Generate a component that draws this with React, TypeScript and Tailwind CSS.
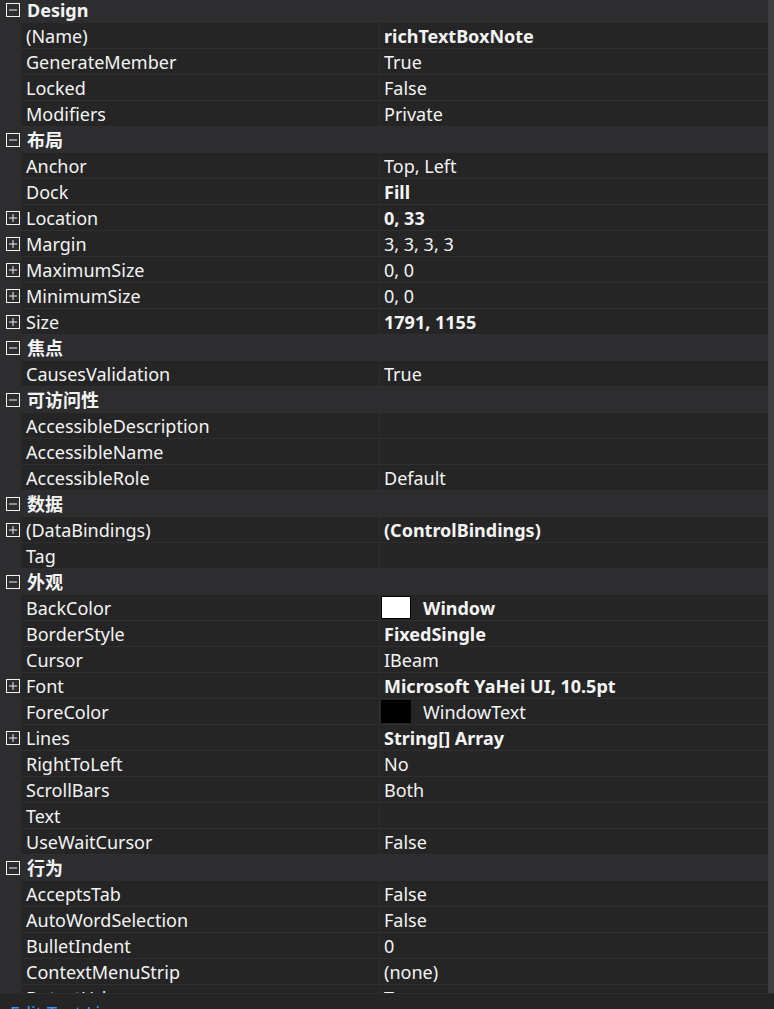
import React from "react";

type Row =
  | { kind: "cat"; label: string }
  | {
      kind: "prop";
      name: string;
      value?: string;
      bold?: boolean;
      expand?: boolean;
      swatch?: "white" | "black";
    };

const rows: Row[] = [
  { kind: "cat", label: "Design" },
  { kind: "prop", name: "(Name)", value: "richTextBoxNote", bold: true },
  { kind: "prop", name: "GenerateMember", value: "True" },
  { kind: "prop", name: "Locked", value: "False" },
  { kind: "prop", name: "Modifiers", value: "Private" },
  { kind: "cat", label: "布局" },
  { kind: "prop", name: "Anchor", value: "Top, Left" },
  { kind: "prop", name: "Dock", value: "Fill", bold: true },
  { kind: "prop", name: "Location", value: "0, 33", bold: true, expand: true },
  { kind: "prop", name: "Margin", value: "3, 3, 3, 3", expand: true },
  { kind: "prop", name: "MaximumSize", value: "0, 0", expand: true },
  { kind: "prop", name: "MinimumSize", value: "0, 0", expand: true },
  { kind: "prop", name: "Size", value: "1791, 1155", bold: true, expand: true },
  { kind: "cat", label: "焦点" },
  { kind: "prop", name: "CausesValidation", value: "True" },
  { kind: "cat", label: "可访问性" },
  { kind: "prop", name: "AccessibleDescription" },
  { kind: "prop", name: "AccessibleName" },
  { kind: "prop", name: "AccessibleRole", value: "Default" },
  { kind: "cat", label: "数据" },
  { kind: "prop", name: "(DataBindings)", value: "(ControlBindings)", bold: true, expand: true },
  { kind: "prop", name: "Tag" },
  { kind: "cat", label: "外观" },
  { kind: "prop", name: "BackColor", value: "Window", bold: true, swatch: "white" },
  { kind: "prop", name: "BorderStyle", value: "FixedSingle", bold: true },
  { kind: "prop", name: "Cursor", value: "IBeam" },
  { kind: "prop", name: "Font", value: "Microsoft YaHei UI, 10.5pt", bold: true, expand: true },
  { kind: "prop", name: "ForeColor", value: "WindowText", swatch: "black" },
  { kind: "prop", name: "Lines", value: "String[] Array", bold: true, expand: true },
  { kind: "prop", name: "RightToLeft", value: "No" },
  { kind: "prop", name: "ScrollBars", value: "Both" },
  { kind: "prop", name: "Text" },
  { kind: "prop", name: "UseWaitCursor", value: "False" },
  { kind: "cat", label: "行为" },
  { kind: "prop", name: "AcceptsTab", value: "False" },
  { kind: "prop", name: "AutoWordSelection", value: "False" },
  { kind: "prop", name: "BulletIndent", value: "0" },
  { kind: "prop", name: "ContextMenuStrip", value: "(none)" },
  { kind: "prop", name: "DetectUrls", value: "True" },
];

const ExpandBox = ({ open }: { open: boolean }) => (
  <svg width="14" height="14" viewBox="0 0 14 14" className="block">
    <rect x="0.5" y="0.5" width="13" height="13" fill="none" stroke="#f1f1f1" strokeWidth="1" />
    <line x1="3" y1="7" x2="11" y2="7" stroke="#f1f1f1" strokeWidth="1" />
    {!open && <line x1="7" y1="3" x2="7" y2="11" stroke="#f1f1f1" strokeWidth="1" />}
  </svg>
);

const App = () => {
  return (
    <div
      className="w-[774px] h-[1009px] overflow-hidden bg-[#252526] text-[#f4f4f4] flex flex-col"
      style={{ fontFamily: '"Noto Sans", "Noto Sans CJK SC", sans-serif' }}
    >
      {/* Property grid */}
      <div className="flex h-[993px] shrink-0 bg-[#2d2d30] overflow-hidden">
        <div className="flex-1 overflow-hidden">
          <div className="-mt-[3px]">
            {rows.map((row, i) =>
              row.kind === "cat" ? (
                <div key={i} className="flex h-[26px] items-center">
                  <div className="w-[21px] pl-[6px] shrink-0">
                    <ExpandBox open />
                  </div>
                  <span className="pl-[6px] text-[18px] font-bold leading-none">{row.label}</span>
                </div>
              ) : (
                <div key={i} className="flex h-[26px]">
                  <div className="w-[21px] pl-[6px] shrink-0 flex items-center">
                    {row.expand && <ExpandBox open={false} />}
                  </div>
                  <div className="flex-1 flex bg-[#252526] border-b border-[#2f2f33] text-[18px] leading-none">
                    <div className="w-[359px] shrink-0 pl-[5px] flex items-center border-r border-[#2f2f33] whitespace-nowrap overflow-hidden">
                      {row.name}
                    </div>
                    <div
                      className={`flex-1 flex items-center whitespace-nowrap ${
                        row.swatch ? "pl-[1px]" : "pl-[4px]"
                      } ${row.bold ? "font-bold" : ""}`}
                    >
                      {row.swatch === "white" && (
                        <span className="w-[30px] h-[23px] bg-white border border-black mr-[12px] shrink-0" />
                      )}
                      {row.swatch === "black" && (
                        <span className="w-[30px] h-[23px] bg-black mr-[12px] shrink-0" />
                      )}
                      {row.value}
                    </div>
                  </div>
                </div>
              )
            )}
          </div>
        </div>
        <div className="w-[6px] shrink-0 bg-[#3e3e42]" />
      </div>

      {/* Commands pane */}
      <div className="h-[16px] shrink-0 overflow-hidden border-t border-[#2d2d30] bg-[#252526] pl-[10px] pt-[10px]">
        <div className="text-[18px] leading-[18px] text-[#3399ff] whitespace-nowrap">Edit Text Lines...</div>
      </div>
    </div>
  );
};

export default App;
